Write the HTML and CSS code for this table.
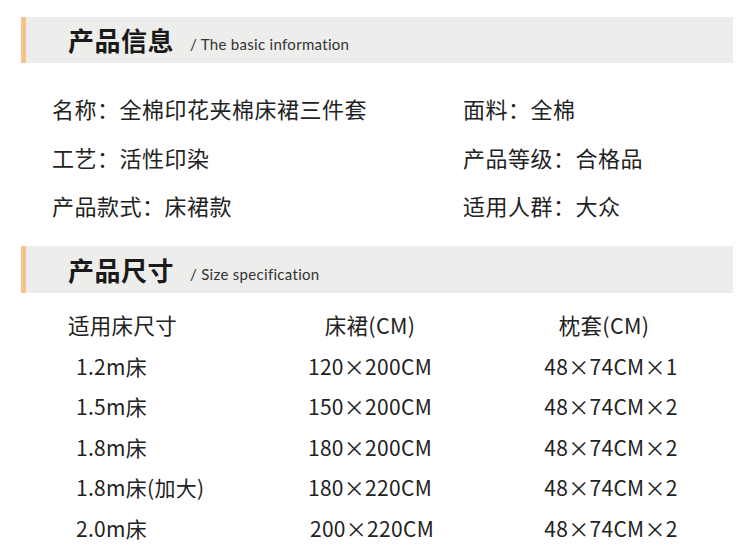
FILE: index.html
```html
<!DOCTYPE html>
<html lang="zh">
<head>
<meta charset="utf-8">
<link rel="stylesheet" href="styles.css">
</head>
<body>
<div class="page">
  <div class="bar bar-1">
    <span class="bar-title">产品信息</span>
    <span class="bar-sub">/ The basic information</span>
  </div>
  <div class="info">
    <div class="info-item">名称：全棉印花夹棉床裙三件套</div>
    <div class="info-item">面料：全棉</div>
    <div class="info-item">工艺：活性印染</div>
    <div class="info-item">产品等级：合格品</div>
    <div class="info-item">产品款式：床裙款</div>
    <div class="info-item">适用人群：大众</div>
  </div>
  <div class="bar bar-2">
    <span class="bar-title">产品尺寸</span>
    <span class="bar-sub">/ Size specification</span>
  </div>
  <div class="table">
    <div class="cell c1 head">适用床尺寸</div>
    <div class="cell c2 head">床裙(CM)</div>
    <div class="cell c3 head">枕套(CM)</div>

    <div class="cell c1">1.2m床</div>
    <div class="cell c2">120×200CM</div>
    <div class="cell c3">48×74CM×1</div>

    <div class="cell c1">1.5m床</div>
    <div class="cell c2">150×200CM</div>
    <div class="cell c3">48×74CM×2</div>

    <div class="cell c1">1.8m床</div>
    <div class="cell c2">180×200CM</div>
    <div class="cell c3">48×74CM×2</div>

    <div class="cell c1">1.8m床(加大)</div>
    <div class="cell c2">180×220CM</div>
    <div class="cell c3">48×74CM×2</div>

    <div class="cell c1">2.0m床</div>
    <div class="cell c2 shift">200×220CM</div>
    <div class="cell c3">48×74CM×2</div>
  </div>
</div>
</body>
</html>
```

FILE: styles.css
```css
html, body {
  margin: 0;
  padding: 0;
  background: #ffffff;
}
.page {
  width: 750px;
  height: 553px;
  overflow: hidden;
  padding-top: 17px;
  box-sizing: border-box;
  font-family: "Noto Sans CJK SC", "Noto Sans", sans-serif;
  color: #222222;
}
.bar {
  margin-left: 21px;
  width: 712px;
  height: 46px;
  box-sizing: border-box;
  background: #ededec;
  border-left: 5px solid #f6c38e;
  display: flex;
  align-items: center;
  padding-left: 42px;
}
.bar-2 {
  height: 47px;
}
.bar-title {
  font-size: 26px;
  font-weight: 700;
  color: #1a1a1a;
  letter-spacing: 0.5px;
  line-height: 1;
}
.bar-sub {
  font-family: "Lato", "Liberation Sans", sans-serif;
  font-size: 15px;
  color: #333333;
  margin-left: 16px;
  margin-top: 8px;
  letter-spacing: 0.3px;
}
.info {
  display: grid;
  grid-template-columns: 411px 1fr;
  padding-left: 52px;
  padding-top: 21px;
  height: 183px;
  box-sizing: border-box;
  grid-auto-rows: 48.5px;
}
.info-item {
  font-size: 22px;
  letter-spacing: 0.5px;
  line-height: 48.5px;
  height: 48.5px;
  white-space: nowrap;
}
.table {
  display: grid;
  grid-template-columns: 172px 260px 216px;
  padding-left: 68px;
  padding-top: 12px;
  grid-auto-rows: 40.6px;
}
.cell {
  font-size: 21px;
  letter-spacing: 0.3px;
  line-height: 40.6px;
  white-space: nowrap;
}
.cell.head {
  font-size: 21.5px;
  letter-spacing: 0.3px;
}
.c1 {
  text-align: left;
}
.c1:not(.head) {
  padding-left: 8px;
}
.c2, .c3 {
  text-align: center;
}
.c3:not(.head) {
  padding-left: 6px;
}
.c3.head {
  padding-right: 8px;
}
.shift {
  padding-left: 4px;
}
```
